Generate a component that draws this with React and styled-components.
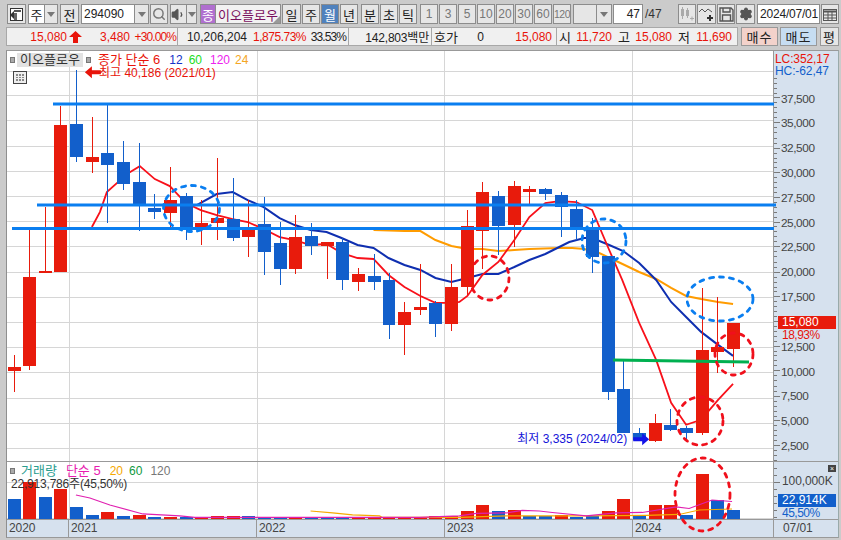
import React from 'react';
import styled, { createGlobalStyle } from 'styled-components';
import { Search, Settings, Volume1 } from 'lucide-react';

const Global = createGlobalStyle`
  html, body { margin: 0; padding: 0; background: #cbcbcb; }
  * { box-sizing: border-box; }
`;
const FONT = `"Liberation Sans", "Noto Sans CJK KR", sans-serif`;

const Page = styled.div`
  width: 841px; height: 540px; overflow: hidden; background: #cbcbcb;
  font: 12px ${FONT}; color: #222; display: flex; flex-direction: column;
  padding: 4px 2px 0 6px; position: relative;
`;
const Toolbar = styled.div`display: flex; height: 20px; padding-left: 1px; align-items: stretch;`;
const Btn = styled.div`
  width: ${p => p.$w}px; margin-left: ${p => p.$ml || 0}px; flex: none;
  background: ${p => p.$active ? '#4f81bd' : p.$bg || '#e6e6e6'};
  color: ${p => p.$active ? '#fff' : p.$muted ? '#777' : p.$fg || '#222'};
  border: 1px solid #8c8c8c; border-left-width: ${p => p.$join ? 0 : 1}px;
  display: flex; align-items: center; justify-content: center;
  font-size: ${p => p.$fs || 13}px; white-space: nowrap; overflow: hidden; letter-spacing: ${p => p.$ls || 0}px;
`;
const Field = styled(Btn)`
  background: #fff; justify-content: ${p => p.$right ? 'flex-end' : 'flex-start'};
  padding: 0 2px; font-size: 12px;
`;
const Caret = styled.span`
  width: 0; height: 0; border-left: 4px solid transparent; border-right: 4px solid transparent;
  border-top: 5px solid #777;
`;
const NameField = styled(Btn)`
  background: #f2f2f2; color: #7a0f5e; position: relative;
  &::after { content: ''; position: absolute; right: 0; bottom: 0; width: 0; height: 0;
    border-left: 7px solid transparent; border-bottom: 7px solid #999; }
`;
const Plain = styled.div`
  width: ${p => p.$w}px; margin-left: ${p => p.$ml || 0}px; flex: none;
  display: flex; align-items: center; color: #333; font-size: 12px;
`;
const QuoteBar = styled.div`display: flex; height: 19px; margin-top: 3px;`;
const Cell = styled.div`
  width: ${p => p.$w}px; flex: none; margin-left: ${p => p.$ml || 0}px;
  background: #f0f0f0; border: 1px solid #a8a8a8; border-left-width: ${p => p.$join ? 0 : 1}px;
  display: flex; align-items: center; white-space: nowrap; position: relative;
`;
const Q = styled.span`
  width: ${p => p.$w}px; margin-left: ${p => p.$ml || 0}px; flex: none; text-align: right;
  color: ${p => p.$red ? '#e8140a' : '#222'}; letter-spacing: ${p => p.$ls || 0}px;
  font-size: ${p => p.$fs || 12}px;
`;
const Trade = styled.div`
  width: ${p => p.$w}px; margin-left: ${p => p.$ml}px; flex: none; background: ${p => p.$bg};
  border: 1px solid #999; display: flex; align-items: center; justify-content: center; letter-spacing: 1px; font-size: 13px;
`;
const Frame = styled.div`
  margin-top: 4px; position: relative; width: 833px; border-left: 1px solid #8f8f8f;
  border-right: 1px solid #9aa; border-top: 1px solid #999; display: flex; flex-direction: column;
  border-bottom: 1px solid #999;
`;
const Pane = styled.div`
  display: flex; height: ${p => p.$h}px; position: relative;
  border-top: ${p => p.$rule ? '1px solid #999' : 'none'};
`;
const Plot = styled.div`width: 767px; background: #fff; position: relative; flex: none; border-right: 1px solid #999;`;
const Axis = styled.div`flex: 1; background: #d6e1ee; position: relative; overflow: hidden;`;
const ChartSvg = styled.svg`display: block; position: absolute; inset: 0; width: 100%; height: 100%;`;
const Overlay = styled.svg`position: absolute; left: 0; top: 0; width: 833px; height: 488px; pointer-events: none; z-index: 3;`;
const Legend = styled.div`
  position: absolute; left: ${p => p.$x}px; top: ${p => p.$y}px; z-index: 2; display: flex; align-items: center;
  white-space: nowrap; line-height: 14px; font-size: 12px;
`;
const Tone = styled.span`
  color: ${p => p.$c}; margin-left: ${p => p.$ml || 0}px; font-size: ${p => p.$fs || 12}px;
  letter-spacing: ${p => p.$ls || 0}px;
`;
const Dot = styled.span`width: 5px; height: 6px; background: #aaa; border: 1px solid #777; display: inline-block; margin-left: ${p => p.$ml || 0}px;`;
const NameTag = styled.span`
  background: #e2e2e2; color: #333; height: 14px; width: 66px; margin-left: 2px;
  display: inline-block; text-align: center; font-size: 13px;
`;
const GridIcon = styled.div`
  position: absolute; left: 6px; top: 20px; width: 14px; height: 13px; z-index: 2; border: 1px solid #444; background: #eee;
  display: grid; grid-template-columns: repeat(3, 1fr); gap: 1px; padding: 2px;
  & > i { background: #888; }
`;
const AxisText = styled.div`
  position: absolute; left: ${p => p.$x}px; top: ${p => p.$y}px; color: ${p => p.$c || '#444'};
  white-space: nowrap; line-height: 12px; letter-spacing: ${p => p.$ls || -0.1}px;
`;
const Tag = styled.div`
  position: absolute; left: 4px; top: ${p => p.$y}px; width: 58px; height: 13px; background: ${p => p.$bg};
  color: #fff; line-height: 13px; padding-left: 4px;
`;
const CloseBox = styled.div`
  position: absolute; left: 54px; top: 3px; width: 8px; height: 7px; background: #444; color: #fff;
  font-size: 7px; line-height: 7px; text-align: center;
`;
const DateBar = styled.div`
  height: 18px; display: flex; background: #d6e1ee; border-top: 1px solid #999; position: relative; color: #444;
`;
const DateCell = styled.div`
  width: ${p => p.$w}px; flex: none; padding-left: ${p => p.$pl || 2}px; line-height: 17px;
  border-right: ${p => p.$last ? 0 : 1}px solid #999; letter-spacing: -.1px;
`;

const R = '#e81b0c', B = '#125fcb';
// [colour, wickTop, wickBottom, bodyTop, bodyBottom]
const C = [
  ['r',355,392,367,371],['r',228,370,277,366],['r',207,273,271,273],['r',106,272,125,272],
  ['b',70,162,124,157],['r',117,173,157,162],['b',105,223,153,165],['b',141,190,162,184],
  ['b',143,231,182,205],['b',194,219,208,212],['r',167,227,200,213],['b',193,240,196,228],
  ['r',200,245,223,227],['r',158,240,218,223],['b',178,241,219,238],['r',200,257,230,237],
  ['b',197,275,224,252],['b',222,285,243,269],['r',215,274,237,269],['b',223,255,236,246],
  ['r',242,279,242,246],['b',238,290,242,280],['r',268,291,274,282],['b',254,290,276,282],
  ['b',273,339,280,325],['r',302,355,312,325],['r',264,315,307,310],['b',301,337,303,324],
  ['r',264,331,287,324],['r',210,295,226,287],['r',182,269,192,231],['b',191,255,196,226],
  ['r',181,247,186,225],['r',186,204,189,192],['b',188,200,189,194],['b',192,237,195,207],
  ['b',200,240,209,228],['b',218,273,228,257],['b',256,400,256,392],['b',360,433,389,433],
  ['b',428,441,433,440],['r',414,442,423,441],['b',409,431,425,430],['b',426,441,428,433],
  ['r',288,435,350,433],['r',297,373,347,352],['r',323,367,323,349],
];
const X = i => Math.round(13.5 + 15.66 * i);
const VOL = [
  ['b',499],['r',482],['b',497],['r',489],['b',507],['b',515],['r',512],['b',516],['r',515],['b',517],['r',517],['b',517],
  ['r',518],['r',516],['r',516],['b',516],['b',517],['b',517],['r',517],['b',517],['b',517],['b',517],['r',517],['r',518],
  ['r',518],['r',518],['r',518],['r',516],['r',516],['r',511],['r',505],['b',511],['r',510],['b',516],['b',516],['r',515],
  ['b',517],['b',516],['r',511],['r',499],['b',515],['r',505],['r',505],['b',515],['r',474],['b',500],['b',510],
];
const MA6 = '92,227 100,212 107,192 117,183 130,172 140,166 155,179 170,186 186,203 201,210 217,215 233,219 248,222 264,229 280,237 295,240 311,245 327,244 342,253 358,258 374,259 389,275 405,287 421,296 436,303 452,303 460,302 468,296 483,275 499,262 515,240 530,217 546,203 560,201 577,202 593,210 610,250 623,280 640,323 657,360 672,403 687,425 702,420 719,400 734,384';
const MA12 = '197,205 217,194 233,192 248,200 264,207 280,218 295,225 311,230 327,232 342,238 358,245 374,248 389,258 405,265 421,270 436,278 452,282 468,278 483,274 499,274 515,267 530,260 546,254 560,247 570,242 585,238 593,238 610,245 624,251 640,263 657,280 672,302 687,317 702,332 719,345 734,356';
const MA24 = '374,230 405,231 421,231 436,240 452,246 468,249 483,249 499,251 515,250 530,249 560,248 573,248 585,249 600,253 617,261 640,272 657,279 672,288 687,296 702,299 719,302 734,304';
const VMAG = '76,495 90,498 110,505 143,514 180,516 195,517.5 420,517.5 460,516 477,513.5 507,513 523,510.5 540,511 553,512.5 587,516 617,513 643,512.5 677,507 690,508.5 713,500 733,501.5';
const VORG = '311,511 333,513 353,515 380,516 383,517.5 460,517.5 507,516 587,516 647,515.5 680,514.5 700,510 733,509';
const PRICES = [37500,35000,32500,30000,27500,25000,22500,20000,17500,15000,12500,10000,7500,5000,2500];
const Y = p => 448 - (p - 2500) * 0.01008;
const GRIDX = [69, 257, 445, 633];

const RING = [
  [191.5,208.5,28,23,'#0a7ef0'],[604,241,22,22,'#0a7ef0'],[720,299,33,22,'#0a7ef0'],
  [489.5,278,19.5,22,'#f0101c'],[734,354,19,21,'#f0101c'],[700,421,23,24,'#f0101c'],[702.5,494.5,27.5,36.5,'#f0101c'],
];

const fmt = n => n.toLocaleString('en-US');

function LayoutIcon() {
  return <svg width="15" height="15" viewBox="0 0 15 15"><rect x="1.5" y="1.5" width="12" height="12" fill="#fff" stroke="#333"/><rect x="5" y="3" width="7" height="2" fill="#555"/><rect x="5" y="6" width="3" height="7" fill="#666"/><path d="M5 4 1 8l4 4z" fill="#333"/></svg>;
}
function CandleAdd() {
  return <svg width="16" height="16" viewBox="0 0 16 16" fill="#aaa"><rect x="2" y="3" width="3" height="7"/><rect x="7" y="4" width="3" height="6"/><path d="M3 1h1v12H3zM8 2h1v10H8z"/><path d="M11 12h4v1h-4zM12.500 10.500h1v4h-1z"/></svg>;
}
function LineAdd() {
  return <svg width="17" height="16" viewBox="0 0 17 16" fill="none" stroke="#555"><path d="M1 6l3-3 3 3 3-3 4 3"/><path d="M9 12h6M12 9v6" stroke="#333" strokeWidth="2"/></svg>;
}
function SaveIcon() {
  return <svg width="15" height="15" viewBox="0 0 15 15" fill="none" stroke="#555" strokeWidth="1.400"><path d="M1 1h11l2 2v11H1z"/><path d="M4 1v4h7V1M3.500 14V8h8v6"/></svg>;
}
function CalendarIcon() {
  return <svg width="14" height="13" viewBox="0 0 14 13" fill="none" stroke="#555"><rect x=".5" y="1.500" width="13" height="11"/><path d="M.5 3.500h13" strokeWidth="2"/><path d="M.5 7h13M.5 10h13M5 4v8M9 4v8"/></svg>;
}

export default function App() {
  return (
    <Page>
      <Global />
      <Toolbar>
        <Btn $w={19}><LayoutIcon /></Btn>
        <Btn $w={17} $ml={2} $bg="#fff">주</Btn>
        <Btn $w={13} $join><Caret /></Btn>
        <Btn $w={19} $ml={2}>전</Btn>
        <Field $w={54} $ml={2}>294090</Field>
        <Btn $w={14} $join><Caret /></Btn>
        <Btn $w={18} $ml={1}><Search size={14} color="#777" strokeWidth={2.5} /></Btn>
        <Btn $w={17} $ml={2}><Volume1 size={15} color="#555" fill="#555" /></Btn>
        <Btn $w={10} $join><Caret /></Btn>
        <Btn $w={16} $ml={3} $bg="#b06fcf" $fg="#fff">종</Btn>
        <NameField $w={65} $join>이오플로우</NameField>
        <Btn $w={19} $ml={1}>일</Btn>
        <Btn $w={18} $ml={1}>주</Btn>
        <Btn $w={18} $ml={1} $active>월</Btn>
        <Btn $w={18} $ml={1}>년</Btn>
        <Btn $w={18} $ml={3}>분</Btn>
        <Btn $w={18} $ml={1}>초</Btn>
        <Btn $w={18} $ml={1}>틱</Btn>
        {['1','3','5','10','20','30','60','120'].map((t, i) => <Btn key={t} $w={18} $ml={i ? 1 : 3} $muted $fs={t === '120' ? 10.5 : 12} $ls={t === '120' ? -0.5 : 0}>{t}</Btn>)}
        <Btn $w={24} $ml={2} />
        <Btn $w={15} $join><Caret /></Btn>
        <Field $w={30} $ml={1} $right>47</Field>
        <Plain $w={30} $ml={2}>/47</Plain>
        <Btn $w={18} $ml={3}><CandleAdd /></Btn>
        <Btn $w={19} $ml={1}><LineAdd /></Btn>
        <Btn $w={18} $ml={1}><SaveIcon /></Btn>
        <Btn $w={19} $ml={1}><Settings size={14} color="#555" fill="#555" /></Btn>
        <Field $w={63} $ml={2} $ls={-0.2}>2024/07/01</Field>
        <Btn $w={18} $ml={1}><CalendarIcon /></Btn>
      </Toolbar>

      <QuoteBar>
        <Cell $w={172}>
          <Q $red $w={60}>15,080</Q>
          <svg width="13" height="12" viewBox="0 0 13 12" style={{ marginLeft: 2 }}><path d="M6.500 0 13 6H9v6H4V6H0z" fill="#e8140a" /></svg>
          <Q $red $w={48}>3,480</Q>
          <Q $red $w={46} $ls={-0.9}>+30.00%</Q>
        </Cell>
        <Cell $w={171} $join>
          <Q $w={69}>10,206,204</Q>
          <Q $red $w={59} $ls={-0.5}>1,875.73%</Q>
          <Q $w={40} $ls={-0.9}>33.53%</Q>
        </Cell>
        <Cell $w={83} $join><Q $w={80} $ls={-0.2}>142,803백만</Q></Cell>
        <Cell $w={125} $join>
          <Q $w={26} $fs={13}>호가</Q>
          <Q $w={26}>0</Q>
          <Q $red $w={68}>15,080</Q>
        </Cell>
        <Cell $w={181} $join>
          <Q $w={14} $fs={13}>시</Q>
          <Q $red $w={41}>11,720</Q>
          <Q $w={18} $fs={13}>고</Q>
          <Q $red $w={42}>15,080</Q>
          <Q $w={18} $fs={13}>저</Q>
          <Q $red $w={42}>11,690</Q>
        </Cell>
        <Trade $w={37} $ml={3} $bg="#f3d2cb">매수</Trade>
        <Trade $w={37} $ml={2} $bg="#c6ddf2">매도</Trade>
        <Trade $w={19} $ml={3} $bg="#e6e6e6">평</Trade>
      </QuoteBar>

      <Frame>
        <Pane $h={410}>
          <Plot>
            <ChartSvg viewBox="7 51 767 410">
              <g stroke="#d6d6d6" strokeWidth="1" shapeRendering="crispEdges">
                {PRICES.map(p => <line key={p} x1="7" x2="774" y1={Math.round(Y(p)) + .5} y2={Math.round(Y(p)) + .5} />)}
                <line x1="7" x2="774" y1="71.500" y2="71.500" />
                {GRIDX.map(x => <line key={x} x1={x + .5} x2={x + .5} y1="51" y2="461" />)}
              </g>
              <polyline points={MA24} fill="none" stroke="#ff9c00" strokeWidth="2" />
              <polyline points={MA12} fill="none" stroke="#0f2fb0" strokeWidth="2" />
              <polyline points={MA6} fill="none" stroke="#f8101a" strokeWidth="1.800" />
              <g shapeRendering="crispEdges">
                {C.map(([k, a, b, c, d], i) => {
                  const col = k === 'r' ? R : B;
                  return (
                    <g key={i} fill={col}>
                      <rect x={X(i)} y={a} width="1" height={b - a} />
                      <rect x={X(i) - 6} y={c} width="13" height={Math.max(d - c, 1)} />
                    </g>
                  );
                })}
              </g>
              <path d="M85 72l7-6v4h9v4h-9v4z" fill="#e8140a" />
              <path d="M634 437.500h9v-4l7 6-7 6v-4h-9z" fill="#1414e8" />
              <text x="518" y="443" fill="#1414d8" fontSize="12" fontFamily={FONT}>최저 3,335 (2024/02)</text>
            </ChartSvg>
            <Legend $x={3} $y={2}>
              <Dot /><NameTag>이오플로우</NameTag><Dot $ml={3} />
              <Tone $c="#e8140a" $ml={7} $fs={13}>종가 단순 6</Tone>
              <Tone $c="#1432c8" $ml={9}>12</Tone>
              <Tone $c="#22dd22" $ml={6}>60</Tone>
              <Tone $c="#ee22ee" $ml={8}>120</Tone>
              <Tone $c="#f5a623" $ml={5}>24</Tone>
            </Legend>
            <Legend $x={92} $y={15}><Tone $c="#e8140a">최고 40,186 (2021/01)</Tone></Legend>
            <GridIcon>{Array.from({ length: 9 }, (_, i) => <i key={i} />)}</GridIcon>
          </Plot>
          <Axis>
            <ChartSvg viewBox="775 51 65 410">
              <g stroke="#777" shapeRendering="crispEdges">
                {Array.from({ length: 80 }, (_, i) => {
                  const p = 40000 - i * 500;
                  if (p < 500) return null;
                  const major = p % 2500 === 0;
                  const y = Math.round(Y(p)) + .5;
                  return y > 75 ? <line key={i} x1="775" x2={major ? 781 : 778} y1={y} y2={y} /> : null;
                })}
              </g>
              {PRICES.filter(p => p !== 15000).map(p => (
                <text key={p} x="782" y={Y(p) + 5} fontSize="12" fill="#444" fontFamily={FONT} letterSpacing="-.4">{fmt(p)}</text>
              ))}
            </ChartSvg>
            <AxisText $x={1} $y={2} $c="#e8140a">LC:352,17</AxisText>
            <AxisText $x={1} $y={14} $c="#125fcb">HC:-62,47</AxisText>
            <Tag $y={265} $bg="#e81b0c">15,080</Tag>
            <AxisText $x={8} $y={278} $c="#e8140a" $ls={-0.5}>18,93%</AxisText>
          </Axis>
        </Pane>
        <Pane $h={58} $rule>
          <Plot>
            <ChartSvg viewBox="7 462 767 57">
              <g stroke="#d6d6d6" shapeRendering="crispEdges">
                <line x1="7" x2="774" y1="482.500" y2="482.500" />
                <line x1="7" x2="774" y1="518.500" y2="518.500" />
                {GRIDX.map(x => <line key={x} x1={x + .5} x2={x + .5} y1="462" y2="519" />)}
              </g>
              <g shapeRendering="crispEdges">
                {VOL.map(([k, t], i) => <rect key={i} x={X(i) - 6} y={t} width="13" height={519 - t} fill={k === 'r' ? R : B} />)}
              </g>
              <polyline points={VORG} fill="none" stroke="#f5a800" strokeWidth="1.200" />
              <polyline points={VMAG} fill="none" stroke="#e020b0" strokeWidth="1.200" />
            </ChartSvg>
            <Legend $x={3} $y={2}>
              <Dot />
              <Tone $c="#2a9d8f" $ml={6} $fs={13}>거래량</Tone>
              <Tone $c="#e81cb0" $ml={9} $fs={13}>단순 5</Tone>
              <Tone $c="#f5a800" $ml={9}>20</Tone>
              <Tone $c="#109a40" $ml={6}>60</Tone>
              <Tone $c="#777" $ml={8}>120</Tone>
            </Legend>
            <Legend $x={4} $y={15}><Tone $c="#333" $ls={-0.2}>22,913,786주(45,50%)</Tone></Legend>
          </Plot>
          <Axis>
            <ChartSvg viewBox="775 462 65 57">
              <g stroke="#777" shapeRendering="crispEdges">
                {[468, 475, 482, 489, 496, 503, 510, 517].map(y => <line key={y} x1="775" x2={y === 482 ? 781 : 778} y1={y + .5} y2={y + .5} />)}
              </g>
            </ChartSvg>
            <AxisText $x={8} $y={13}>100,000K</AxisText>
            <Tag $y={32} $bg="#125fcb">22,914K</Tag>
            <AxisText $x={8} $y={45} $c="#125fcb" $ls={-0.5}>45,50%</AxisText>
            <CloseBox>×</CloseBox>
          </Axis>
        </Pane>
        <DateBar>
          <DateCell $w={62}>2020</DateCell>
          <DateCell $w={188}>2021</DateCell>
          <DateCell $w={188}>2022</DateCell>
          <DateCell $w={188}>2023</DateCell>
          <DateCell $w={141}>2024</DateCell>
          <DateCell $w={50} $pl={9} $last>07/01</DateCell>
        </DateBar>
        <Overlay viewBox="7 51 833 488">
          <g stroke="#0a7ef0" strokeWidth="3">
            <line x1="53" x2="774" y1="104" y2="104" />
            <line x1="37" x2="776" y1="205" y2="205" />
            <line x1="12" x2="774" y1="228.500" y2="228.500" />
          </g>
          <line x1="613" x2="749" y1="360" y2="362" stroke="#00b050" strokeWidth="3" />
          {RING.map(([cx, cy, rx, ry, c], i) => (
            <ellipse key={i} cx={cx} cy={cy} rx={rx} ry={ry} fill="none" stroke={c} strokeWidth="2.800" strokeDasharray="4 6" strokeLinecap="round" />
          ))}
        </Overlay>
      </Frame>
    </Page>
  );
}
